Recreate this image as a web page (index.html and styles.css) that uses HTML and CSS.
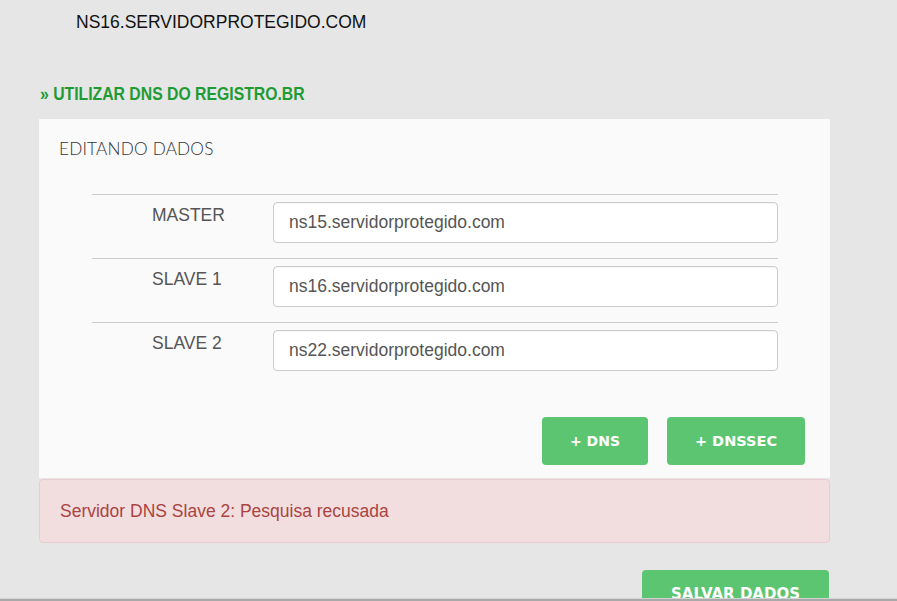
FILE: index.html
```html
<!DOCTYPE html>
<html lang="pt-BR">
<head>
<meta charset="utf-8">
<title>Editando dados</title>
<link rel="stylesheet" href="styles.css">
</head>
<body>
<div class="page">
  <h1 class="domain">NS16.SERVIDORPROTEGIDO.COM</h1>
  <div class="registro-row"><a class="registro-link" href="#">» UTILIZAR DNS DO REGISTRO.BR</a></div>
  <div class="content">
    <div class="panel">
      <h2 class="panel-title">EDITANDO DADOS</h2>
      <div class="dns-table">
        <div class="dns-row">
          <div class="dns-label">MASTER</div>
          <input class="dns-input" type="text" value="ns15.servidorprotegido.com">
        </div>
        <div class="dns-row">
          <div class="dns-label">SLAVE 1</div>
          <input class="dns-input" type="text" value="ns16.servidorprotegido.com">
        </div>
        <div class="dns-row">
          <div class="dns-label">SLAVE 2</div>
          <input class="dns-input" type="text" value="ns22.servidorprotegido.com">
        </div>
      </div>
      <div class="actions">
        <button class="btn btn-dns">+ DNS</button>
        <button class="btn btn-dnssec">+ DNSSEC</button>
      </div>
    </div>
    <div class="alert">Servidor DNS Slave 2: Pesquisa recusada</div>
    <div class="save-row">
      <button class="btn btn-save">SALVAR DADOS</button>
    </div>
  </div>
</div>
<div class="bottom-edge"></div>
</body>
</html>
```

FILE: styles.css
```css
* { box-sizing: border-box; }
html, body { margin: 0; padding: 0; }
body {
  background: #e6e6e6;
  font-family: "Liberation Sans", Arial, sans-serif;
  height: 601px;
  overflow: hidden;
  position: relative;
}
.page {
  height: 598px;
  overflow: hidden;
}
.domain {
  margin: 0;
  padding: 12px 0 0 76px;
  font-size: 17.5px;
  font-weight: normal;
  line-height: 20px;
  color: #111;
}
.registro-row {
  margin: 52px 0 0 40px;
  height: 20px;
}
.registro-link {
  display: inline-block;
  font-family: "Liberation Sans", Arial, sans-serif;
  font-size: 19px;
  font-weight: bold;
  line-height: 20px;
  color: #1f9b35;
  text-decoration: none;
  white-space: nowrap;
  transform: scaleX(0.83);
  transform-origin: left center;
}
.content {
  margin: 15px 0 0 39px;
  width: 791px;
}
.panel {
  background: #fafafa;
  padding: 19px 25px 13px 20px;
}
.panel-title {
  margin: 0;
  font-family: "Lato", sans-serif;
  font-weight: 300;
  font-size: 17.2px;
  line-height: 22px;
  color: #333;
  letter-spacing: 0.2px;
}
.dns-table {
  margin: 34px 0 0 33px;
  width: 686px;
}
.dns-row {
  display: flex;
  align-items: flex-start;
  border-top: 1px solid #cccccc;
  height: 64px;
  padding-top: 7px;
}
.dns-label {
  width: 181px;
  padding: 3px 0 0 60px;
  font-size: 17.5px;
  line-height: 20px;
  color: #555;
}
.dns-input {
  width: 505px;
  height: 41px;
  border: 1px solid #cccccc;
  border-radius: 4px;
  background: #fff;
  padding: 0 15px;
  font-family: "Liberation Sans", Arial, sans-serif;
  font-size: 17.5px;
  color: #555;
  box-shadow: inset 0 1px 1px rgba(0,0,0,0.04);
}
.actions {
  display: flex;
  justify-content: flex-end;
  gap: 19px;
  margin-top: 31px;
}
.btn {
  background: #5cc571;
  color: #fff;
  border: 0;
  border-radius: 4px;
  height: 48px;
  font-family: "DejaVu Sans", sans-serif;
  font-weight: 700;
  font-size: 14px;
  padding: 0;
}
.btn-dns { width: 106px; }
.btn-dnssec { width: 138px; font-size: 14.5px; }
.alert {
  margin-top: 1px;
  height: 64px;
  background: #f2dede;
  border: 1px solid #ebccd1;
  border-radius: 4px;
  color: #a94442;
  font-size: 17.5px;
  line-height: 20px;
  padding: 21px 0 0 20px;
}
.save-row {
  display: flex;
  justify-content: flex-end;
  margin-top: 27px;
}
.btn-save {
  width: 187px;
  margin-right: 1px;
  font-size: 15px;
}
.bottom-edge {
  height: 3px;
  background: #a9a9a9;
  border-top: 1px solid #d4d4d4;
}
```
